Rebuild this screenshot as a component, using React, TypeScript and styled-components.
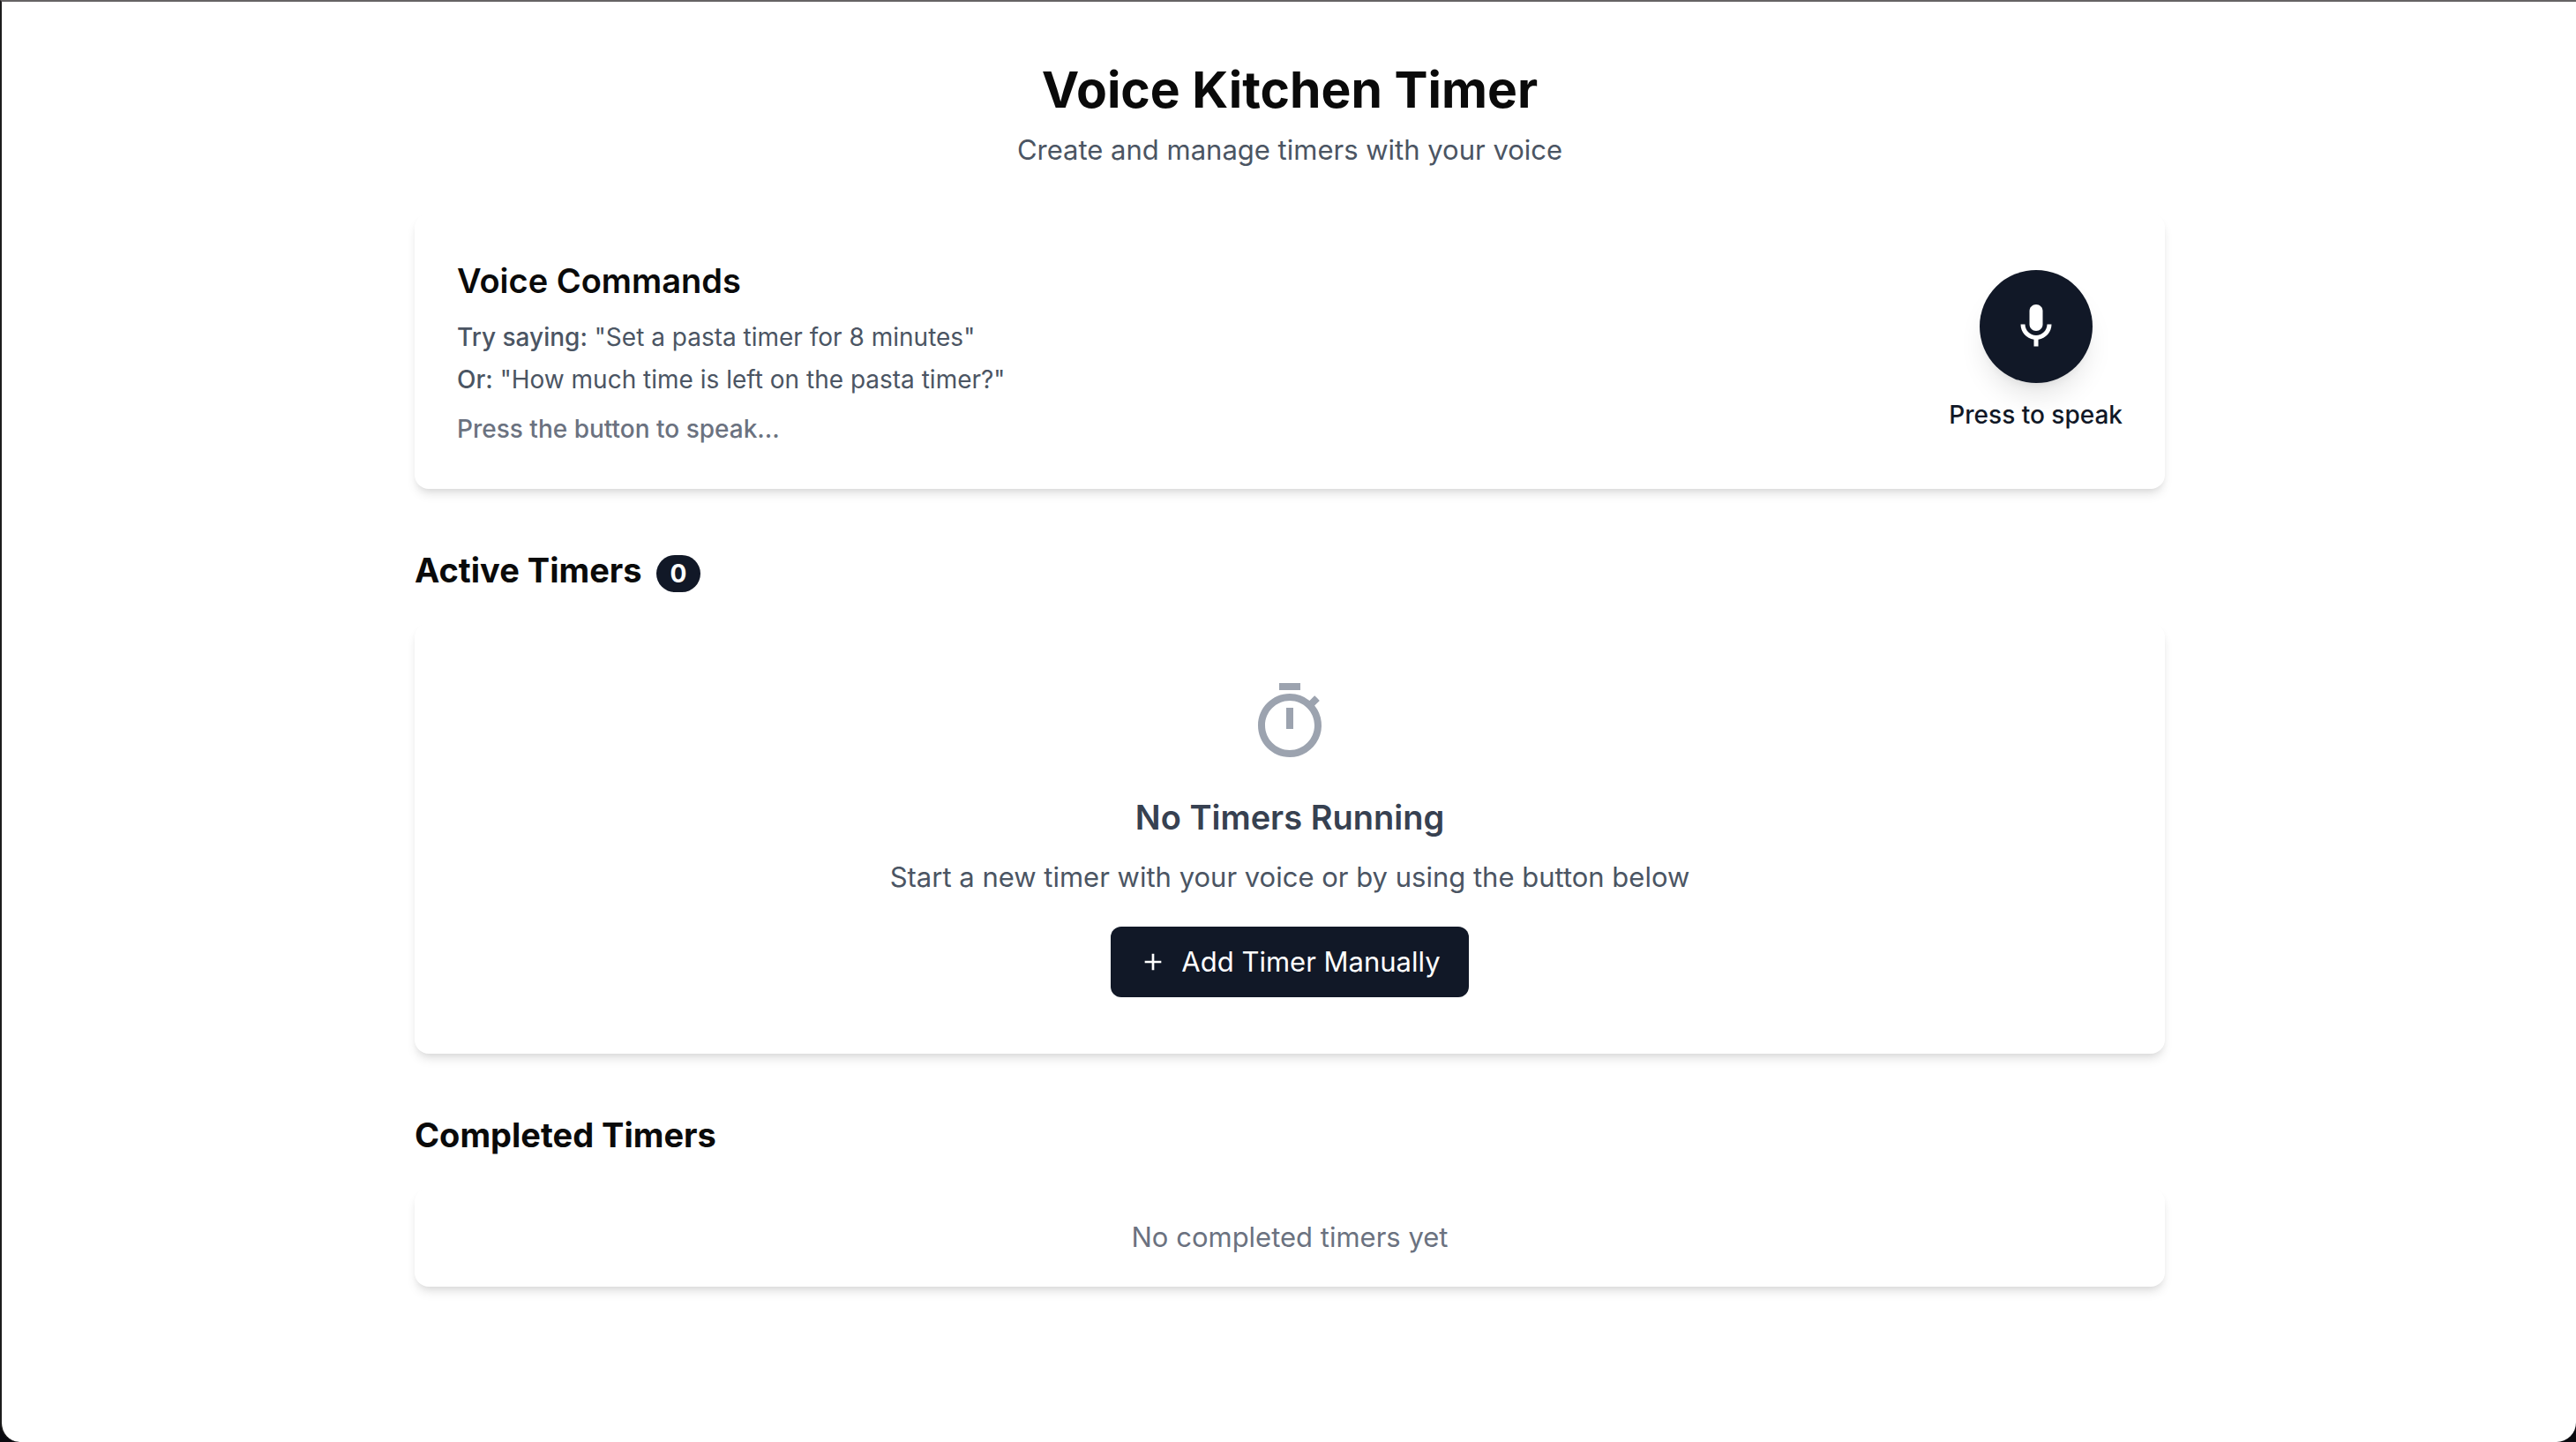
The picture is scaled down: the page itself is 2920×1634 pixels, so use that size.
import React from "react";
import styled, { createGlobalStyle } from "styled-components";

const GlobalStyle = createGlobalStyle`
  *, *::before, *::after { box-sizing: border-box; }
  html { background: #0a0a0f; }
  body {
    margin: 0;
    font-family: Inter, "Liberation Sans", sans-serif;
    font-size: 32px;
    line-height: 48px;
    color: #0a0a0a;
    -webkit-font-smoothing: antialiased;
  }
  h1, h2, h3, p { margin: 0; }
`;

const Frame = styled.div`
  min-height: 100vh;
  padding-left: 2px;
  background: #fff;
  border-top: 2px solid #666364;
  border-left: 2px solid #1c1c1c;
  border-radius: 0 0 22px 22px;
`;

const Page = styled.main`
  display: flex;
  flex-direction: column;
  gap: 64px;
  max-width: 2048px;
  margin: 0 auto;
  padding: 64px 32px;
`;

const Header = styled.header`
  text-align: center;
  margin-bottom: -16px;
`;

const Title = styled.h1`
  font-size: 57px;
  line-height: 72px;
  font-weight: 700;
  margin-bottom: 8px;
`;

const Text = styled.p<{ $tone?: string }>`
  font-size: 31px;
  line-height: 48px;
  color: ${(p) => p.$tone ?? "#4b5563"};
`;

const Card = styled.div`
  background: #fff;
  border-radius: 16px;
  box-shadow: 0 8px 12px -2px rgba(0, 0, 0, 0.1), 0 4px 8px -4px rgba(0, 0, 0, 0.1);
`;

const CommandCard = styled(Card)`
  display: flex;
  align-items: center;
  justify-content: space-between;
  padding: 48px;
`;

const Heading = styled.h2<{ $weight?: number; $tone?: string }>`
  font-size: 38px;
  line-height: 56px;
  font-weight: ${(p) => p.$weight ?? 700};
  color: ${(p) => p.$tone ?? "#0a0a0a"};
`;

const Hints = styled.div`
  display: flex;
  flex-direction: column;
  gap: 8px;
  margin: 16px 0;
`;

const Small = styled.p<{ $tone?: string; $weight?: number }>`
  font-size: 28px;
  line-height: 40px;
  font-weight: ${(p) => p.$weight ?? 400};
  color: ${(p) => p.$tone ?? "#4b5563"};

  strong { font-weight: 500; }
`;

const Speak = styled.div`
  display: flex;
  flex-direction: column;
  align-items: center;
  gap: 16px;
`;

const MicButton = styled.button`
  display: flex;
  align-items: center;
  justify-content: center;
  width: 128px;
  height: 128px;
  padding: 0;
  border: 0;
  border-radius: 50%;
  background: #111827;
  color: #fff;
  cursor: pointer;
  box-shadow: 0 20px 30px -6px rgba(0, 0, 0, 0.1), 0 8px 12px -8px rgba(0, 0, 0, 0.1);
`;

const Section = styled.section`
  display: flex;
  flex-direction: column;
  gap: 32px;
`;

const Badge = styled.span`
  margin-left: 16px;
  padding: 4px 16px;
  border-radius: 999px;
  background: #111827;
  color: #fff;
  font-size: 28px;
  line-height: 40px;
`;

const EmptyCard = styled(Card)`
  display: flex;
  flex-direction: column;
  align-items: center;
  padding: 64px;
  text-align: center;
`;

const EmptyIcon = styled.svg`
  display: block;
  margin-bottom: 32px;
  color: #9ca3af;
`;

const EmptyText = styled(Text)`
  margin: 16px 0 32px;
`;

const AddButton = styled.button`
  display: inline-flex;
  align-items: center;
  gap: 16px;
  padding: 16px 32px;
  border: 0;
  border-radius: 12px;
  background: #111827;
  color: #fff;
  font-family: inherit;
  font-size: 31px;
  line-height: 48px;
  cursor: pointer;
`;

const CompletedCard = styled(Card)`
  padding: 32px;
  text-align: center;
`;

export default function App() {
  return (
    <>
      <GlobalStyle />
      <Frame>
        <Page>
          <Header>
            <Title>Voice Kitchen Timer</Title>
            <Text>Create and manage timers with your voice</Text>
          </Header>

          <CommandCard>
            <div>
              <Heading $weight={600}>Voice Commands</Heading>
              <Hints>
                <Small>
                  <strong>Try saying:</strong> "Set a pasta timer for 8 minutes"
                </Small>
                <Small>
                  <strong>Or:</strong> "How much time is left on the pasta timer?"
                </Small>
              </Hints>
              <Small $tone="#6b7280" $weight={500}>Press the button to speak...</Small>
            </div>
            <Speak>
              <MicButton type="button" aria-labelledby="speak-label">
                <svg width="60" height="60" viewBox="0 0 24 24" fill="currentColor" aria-hidden="true">
                  <path d="M12 14c1.66 0 3-1.34 3-3V5c0-1.66-1.34-3-3-3S9 3.34 9 5v6c0 1.66 1.34 3 3 3z" />
                  <path d="M17 11c0 2.76-2.24 5-5 5s-5-2.24-5-5H5c0 3.53 2.61 6.43 6 6.92V21h2v-3.08c3.39-.49 6-3.39 6-6.92h-2z" />
                </svg>
              </MicButton>
              <Small id="speak-label" $tone="#111827" $weight={500}>Press to speak</Small>
            </Speak>
          </CommandCard>

          <Section>
            <Heading>
              Active Timers<Badge>0</Badge>
            </Heading>
            <EmptyCard>
              <EmptyIcon width="96" height="96" viewBox="0 0 24 24" fill="currentColor" aria-hidden="true">
                <path d="M15 1H9v2h6V1zm-4 13h2V8h-2v6zm8.03-6.61l1.42-1.42c-.43-.51-.9-.99-1.41-1.41l-1.42 1.42A8.962 8.962 0 0012 4c-4.97 0-9 4.03-9 9s4.02 9 9 9a8.994 8.994 0 007.03-14.61zM12 20c-3.87 0-7-3.13-7-7s3.13-7 7-7 7 3.13 7 7-3.13 7-7 7z" />
              </EmptyIcon>
              <Heading as="h3" $weight={600} $tone="#374151">No Timers Running</Heading>
              <EmptyText>Start a new timer with your voice or by using the button below</EmptyText>
              <AddButton type="button">
                <svg width="32" height="32" viewBox="0 0 24 24" fill="currentColor" aria-hidden="true">
                  <path d="M19 13h-6v6h-2v-6H5v-2h6V5h2v6h6v2z" />
                </svg>
                Add Timer Manually
              </AddButton>
            </EmptyCard>
          </Section>

          <Section>
            <Heading>Completed Timers</Heading>
            <CompletedCard>
              <Text $tone="#6b7280">No completed timers yet</Text>
            </CompletedCard>
          </Section>
        </Page>
      </Frame>
    </>
  );
}
